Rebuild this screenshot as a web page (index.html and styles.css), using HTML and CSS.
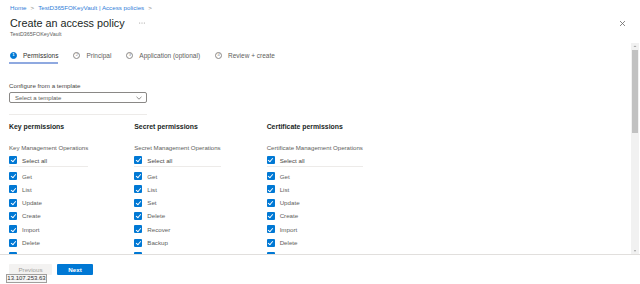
FILE: index.html
```html
<!DOCTYPE html>
<html>
<head>
<meta charset="utf-8">
<link rel="stylesheet" href="styles.css">
</head>
<body>
<div class="blade">
  <header class="head">
    <nav class="crumbs"><span class="link">Home</span><span class="sep">&gt;</span><span class="link">TestD365FOKeyVault | Access policies</span><span class="sep">&gt;</span></nav>
    <div class="title-row">
      <h1 class="title">Create an access policy</h1>
      <svg class="more" width="6" height="2" viewBox="0 0 6 2"><circle cx="0.7" cy="1" r="0.5"/><circle cx="3" cy="1" r="0.5"/><circle cx="5.3" cy="1" r="0.5"/></svg>
      <svg class="close" width="7" height="7" viewBox="0 0 7 7"><path d="M1 1 L6 6 M6 1 L1 6"/></svg>
    </div>
    <div class="subtitle">TestD365FOKeyVault</div>
  </header>

  <div class="main">
    <div class="scroll">
      <div class="tabs">
        <div class="tab active"><span class="num">1</span><span class="tab-label">Permissions</span></div>
        <div class="tab"><span class="num">2</span><span class="tab-label">Principal</span></div>
        <div class="tab"><span class="num">3</span><span class="tab-label">Application (optional)</span></div>
        <div class="tab"><span class="num">4</span><span class="tab-label">Review + create</span></div>
      </div>

      <div class="template">
        <div class="field-label">Configure from a template</div>
        <div class="select"><span>Select a template</span>
          <svg class="chev" width="6" height="4" viewBox="0 0 6 4"><path d="M0.5 0.8 L3 3.2 L5.5 0.8"/></svg>
        </div>
        <div class="rule"></div>
      </div>

      <div class="perms">
        <section class="col">
          <h2 class="col-title">Key permissions</h2>
          <div class="col-sub">Key Management Operations</div>
          <div class="cb-row all"><span class="cb"></span>Select all</div>
          <div class="col-rule"></div>
          <div class="cb-list">
            <div class="cb-row"><span class="cb"></span>Get</div>
            <div class="cb-row"><span class="cb"></span>List</div>
            <div class="cb-row"><span class="cb"></span>Update</div>
            <div class="cb-row"><span class="cb"></span>Create</div>
            <div class="cb-row"><span class="cb"></span>Import</div>
            <div class="cb-row"><span class="cb"></span>Delete</div>
            <div class="cb-row"><span class="cb"></span>Recover</div>
          </div>
        </section>
        <section class="col">
          <h2 class="col-title">Secret permissions</h2>
          <div class="col-sub">Secret Management Operations</div>
          <div class="cb-row all"><span class="cb"></span>Select all</div>
          <div class="col-rule"></div>
          <div class="cb-list">
            <div class="cb-row"><span class="cb"></span>Get</div>
            <div class="cb-row"><span class="cb"></span>List</div>
            <div class="cb-row"><span class="cb"></span>Set</div>
            <div class="cb-row"><span class="cb"></span>Delete</div>
            <div class="cb-row"><span class="cb"></span>Recover</div>
            <div class="cb-row"><span class="cb"></span>Backup</div>
            <div class="cb-row"><span class="cb"></span>Restore</div>
          </div>
        </section>
        <section class="col">
          <h2 class="col-title">Certificate permissions</h2>
          <div class="col-sub">Certificate Management Operations</div>
          <div class="cb-row all"><span class="cb"></span>Select all</div>
          <div class="col-rule"></div>
          <div class="cb-list">
            <div class="cb-row"><span class="cb"></span>Get</div>
            <div class="cb-row"><span class="cb"></span>List</div>
            <div class="cb-row"><span class="cb"></span>Update</div>
            <div class="cb-row"><span class="cb"></span>Create</div>
            <div class="cb-row"><span class="cb"></span>Import</div>
            <div class="cb-row"><span class="cb"></span>Delete</div>
            <div class="cb-row"><span class="cb"></span>Recover</div>
          </div>
        </section>
      </div>
    </div>
    <div class="scrollbar">
      <svg class="arrow" width="8" height="6" viewBox="0 0 8 6"><path class="up" d="M2.5 4 L4 2.5 L5.5 4 Z"/></svg>
      <div class="thumb"></div>
      <div class="track-fill"></div>
      <svg class="arrow" width="8" height="6" viewBox="0 0 8 6"><path class="down" d="M3 2.5 L5 2.5 L4 3.5 Z"/></svg>
    </div>
  </div>

  <footer class="foot">
    <button class="btn prev">Previous</button>
    <button class="btn next">Next</button>
    <div class="tip">13.107.253.63</div>
  </footer>
</div>
</body>
</html>
```

FILE: styles.css
```css
* { box-sizing: border-box; }

html, body {
  margin: 0;
  padding: 0;
  background: #ffffff;
}

body {
  width: 640px;
  height: 284px;
  overflow: hidden;
  font-family: "Segoe UI", "Liberation Sans", Arial, sans-serif;
  color: #323130;
}

.blade {
  display: flex;
  flex-direction: column;
  height: 284px;
}

/* ---------- header ---------- */
.head {
  padding-left: 10px;
}

.crumbs {
  display: flex;
  align-items: center;
  padding-top: 3px;
  height: 12px;
  line-height: 9px;
  font-size: 6.2px;
}

.crumbs .link { color: #2f7ed8; }
.crumbs .sep { color: #8a8886; margin: 0 4px; }

.title-row {
  display: flex;
  align-items: center;
  margin-top: 3px;
  height: 16px;
}

.title {
  margin: 0;
  font-size: 10.8px;
  font-weight: 400;
  line-height: 16px;
  color: #201f1e;
}

.more {
  margin-left: 14px;
  fill: #8a8886;
}

.close {
  margin-left: auto;
  margin-right: 14px;
  stroke: #6b6a69;
  stroke-width: 0.8;
  fill: none;
}

.subtitle {
  height: 7px;
  line-height: 7px;
  font-size: 5.4px;
  color: #605e5c;
}

/* ---------- main ---------- */
.main {
  display: flex;
  margin-top: 5px;
  height: 212px;
  border-bottom: 1px solid #e1dfdd;
}

.scroll {
  flex: 1;
  overflow: hidden;
  padding-left: 9px;
}

.tabs {
  display: flex;
  gap: 14px;
  padding-top: 6px;
}

.tab {
  display: flex;
  align-items: center;
  gap: 6px;
  height: 15px;
  padding-left: 1px;
  padding-bottom: 2px;
  font-size: 6.5px;
  color: #605e5c;
}

.tab.active {
  color: #323130;
  border-bottom: 2px solid #8fa9e0;
  padding-bottom: 0;
}

.num {
  display: inline-flex;
  align-items: center;
  justify-content: center;
  width: 7px;
  height: 7px;
  border-radius: 50%;
  border: 0.8px solid #8a8886;
  font-size: 4.2px;
  line-height: 1;
  color: #8a8886;
}

.tab.active .num {
  background: #0078d4;
  border-color: #0078d4;
  color: #ffffff;
  font-weight: 700;
}

.template {
  width: 138px;
  margin-top: 17px;
}

.field-label {
  font-size: 6.2px;
  line-height: 9px;
  color: #484644;
}

.select {
  display: flex;
  align-items: center;
  justify-content: space-between;
  margin-top: 2px;
  height: 11px;
  padding: 0 4px 0 5px;
  border: 1px solid #8a8886;
  border-radius: 2px;
  font-size: 6px;
  color: #605e5c;
}

.chev {
  fill: none;
  stroke: #605e5c;
  stroke-width: 0.7;
}

.rule {
  margin-top: 11px;
  height: 1px;
  background: #edebe9;
}

/* ---------- permissions ---------- */
.perms {
  display: flex;
  gap: 46px;
  margin-top: 7px;
}

.col {
  display: flex;
  flex-direction: column;
}

.col-title {
  margin: 0;
  font-size: 6.9px;
  line-height: 10px;
  font-weight: 700;
  color: #201f1e;
}

.col-sub {
  margin-top: 11px;
  font-size: 6.1px;
  line-height: 9px;
  color: #605e5c;
  white-space: nowrap;
}

.cb-row {
  display: flex;
  align-items: center;
  gap: 5px;
  height: 8px;
  font-size: 6.2px;
  color: #605e5c;
}

.cb-row.all {
  margin-top: 4px;
  color: #484644;
}

.cb {
  position: relative;
  flex: none;
  width: 8px;
  height: 8px;
  border-radius: 1px;
  background: #0078d4;
}

.cb::after {
  content: "";
  position: absolute;
  left: 2.6px;
  top: 1.2px;
  width: 2px;
  height: 3.8px;
  border-right: 1px solid #ffffff;
  border-bottom: 1px solid #ffffff;
  transform: rotate(40deg);
}

.col-rule {
  margin-top: 2px;
  height: 1px;
  background: #edebe9;
}

.cb-list {
  display: flex;
  flex-direction: column;
  gap: 5.33px;
  margin-top: 5px;
}

/* ---------- scrollbar ---------- */
.scrollbar {
  display: flex;
  flex-direction: column;
  width: 8px;
  margin-right: 1px;
  background: #f1f1f1;
}

.arrow { flex: none; }
.arrow .up { fill: #a3a3a3; }
.arrow .down { fill: #505050; }

.thumb {
  margin: 1px 1px 0;
  height: 83px;
  background: #c1c1c1;
}

.track-fill { flex: 1; }

/* ---------- footer ---------- */
.foot {
  position: relative;
  display: flex;
  gap: 5px;
  padding: 9px 0 0 9px;
  flex: 1;
}

.btn {
  height: 11px;
  padding: 0;
  border: none;
  border-radius: 1px;
  font-family: inherit;
  font-size: 6.2px;
  line-height: 11px;
}

.prev {
  width: 43px;
  background: #f3f2f1;
  color: #a19f9d;
}

.next {
  width: 36px;
  background: #0078d4;
  color: #ffffff;
  font-weight: 700;
}

.tip {
  position: absolute;
  left: 6px;
  top: 19px;
  width: 41px;
  height: 9px;
  border: 1px solid #a19f9d;
  background: #f5f5f5;
  font-size: 6px;
  line-height: 7px;
  text-align: center;
  color: #323130;
}
```
